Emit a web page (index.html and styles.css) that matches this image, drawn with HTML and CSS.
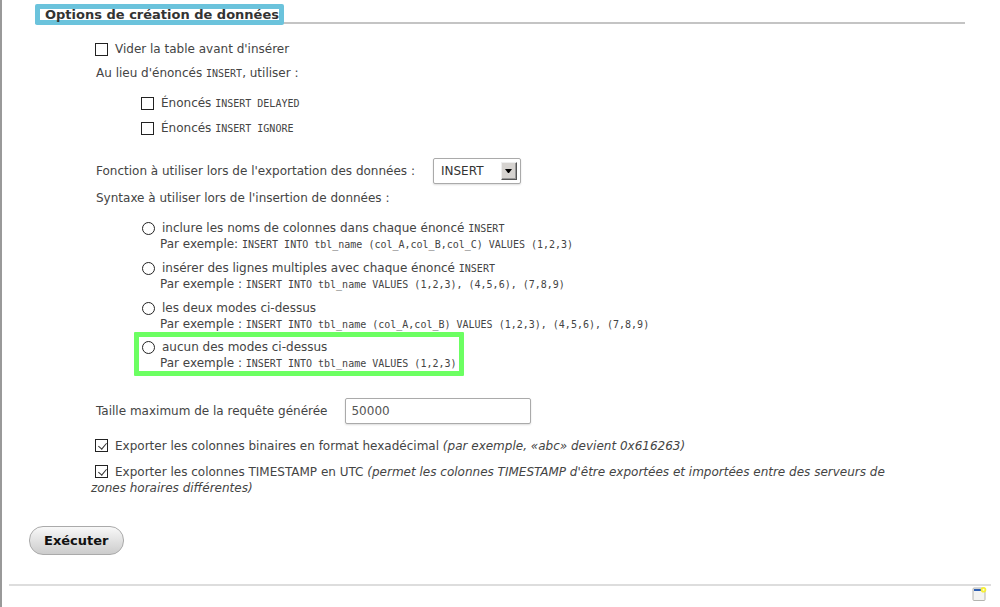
FILE: index.html
```html
<!DOCTYPE html>
<html lang="fr">
<head>
<meta charset="utf-8">
<title>Options de création de données</title>
<link rel="stylesheet" href="styles.css">
</head>
<body>
<form class="page">
  <h2 class="heading"><span class="heading-mark">Options de création de données</span></h2>
  <div class="options">
    <div class="row"><input class="check" type="checkbox" id="truncate"><label for="truncate">Vider la table avant d'insérer</label></div>
    <p class="text intro">Au lieu d'énoncés <code>INSERT</code>, utiliser :</p>
    <div class="sub statements">
      <div class="row"><input class="check" type="checkbox" id="delayed"><label for="delayed">Énoncés <code>INSERT DELAYED</code></label></div>
      <div class="row"><input class="check" type="checkbox" id="ignore"><label for="ignore">Énoncés <code>INSERT IGNORE</code></label></div>
    </div>
    <div class="row text function">
      <label for="type">Fonction à utiliser lors de l'exportation des données :</label>
      <span class="select-box">
        <select class="select" id="type"><option>INSERT</option><option>UPDATE</option><option>REPLACE</option></select>
        <span class="arrow"><svg width="7" height="4" viewBox="0 0 7 4"><path d="M0 0h7L4 4H3z"/></svg></span>
      </span>
    </div>
    <p class="text syntax">Syntaxe à utiliser lors de l'insertion de données :</p>
    <div class="sub modes">
      <div class="mode">
        <div class="row"><input class="radio" type="radio" name="mode" id="m1"><label for="m1">inclure les noms de colonnes dans chaque énoncé <code>INSERT</code></label></div>
        <p class="example">Par exemple: <code>INSERT INTO tbl_name (col_A,col_B,col_C) VALUES (1,2,3)</code></p>
      </div>
      <div class="mode">
        <div class="row"><input class="radio" type="radio" name="mode" id="m2"><label for="m2">insérer des lignes multiples avec chaque énoncé <code>INSERT</code></label></div>
        <p class="example">Par exemple : <code>INSERT INTO tbl_name VALUES (1,2,3), (4,5,6), (7,8,9)</code></p>
      </div>
      <div class="mode">
        <div class="row"><input class="radio" type="radio" name="mode" id="m3"><label for="m3">les deux modes ci-dessus</label></div>
        <p class="example">Par exemple : <code>INSERT INTO tbl_name (col_A,col_B) VALUES (1,2,3), (4,5,6), (7,8,9)</code></p>
      </div>
      <div class="mode marked">
        <div class="row"><input class="radio" type="radio" name="mode" id="m4"><label for="m4">aucun des modes ci-dessus</label></div>
        <p class="example">Par exemple : <code>INSERT INTO tbl_name VALUES (1,2,3)</code></p>
      </div>
    </div>
    <div class="row text size">
      <label for="max">Taille maximum de la requête générée</label>
      <input class="field" type="text" id="max" value="50000">
    </div>
    <div class="exports">
      <div><input class="check" type="checkbox" id="hex" checked><label for="hex">Exporter les colonnes binaires en format hexadécimal <em>(par exemple, «abc» devient 0x616263)</em></label></div>
      <div><input class="check" type="checkbox" id="utc" checked><label for="utc">Exporter les colonnes TIMESTAMP en UTC <em>(permet les colonnes TIMESTAMP d'être exportées et importées entre des serveurs de zones horaires différentes)</em></label></div>
    </div>
  </div>
  <button class="submit" type="submit">Exécuter</button>
  <footer class="footer">
    <a href="#" class="window-link" aria-label="Nouvelle fenêtre"><svg width="15" height="15" viewBox="0 0 15 15"><rect x="1" y="1" width="12" height="12.5" rx="1" fill="#f3f3f1" stroke="#b4b4b0"/><path d="M2 3h9" stroke="#2d5eb1" stroke-width="2"/><circle cx="11.5" cy="2.8" r="2.8" fill="#f5ef36"/><circle cx="11.5" cy="2.8" r="1" fill="#fffde0"/></svg></a>
  </footer>
</form>
</body>
</html>
```
FILE: styles.css
```css
* { box-sizing: border-box; }
body {
  margin: 0;
  min-height: 100vh;
  border-left: 2px solid #999;
  background: #fff;
  color: #444;
  font: 12px/16px "DejaVu Sans", sans-serif;
}
p { margin: 0; }
code { font: 10px/12px "DejaVu Sans Mono", monospace; }
.page { padding: 4px 9px 0 7px; }
.heading {
  display: flex;
  margin: 0 26px;
  border-bottom: 2px solid #c4c4c4;
  font-size: 13px;
  line-height: 11px;
}
.heading-mark {
  margin-bottom: -3px;
  padding-left: 5px;
  border: 5px solid #6bc3dc;
  border-radius: 2px;
  color: #333;
}
.options { padding: 17px 76px 0 82px; }
.row { display: flex; align-items: center; min-height: 16px; }
.text { padding-left: 5px; }
.intro { margin-top: 8px; }
.sub { padding-left: 50px; }
.statements { display: grid; gap: 9px; margin-top: 14px; }
.check, .radio {
  appearance: none;
  flex: none;
  width: 13px;
  height: 13px;
  margin: 0 7px 0 4px;
  border: 1px solid #222;
  background: #fff;
}
.statements .check { margin-left: 0; }
.radio { margin: 0 7px 0 1px; border-radius: 50%; }
.check:checked { position: relative; }
.check:checked::after {
  content: "";
  position: absolute;
  left: 4px;
  top: 1px;
  width: 4px;
  height: 7px;
  border: solid #333;
  border-width: 0 1px 1px 0;
  transform: rotate(40deg);
}
.function { margin-top: 22px; gap: 18px; }
.select-box { position: relative; }
.select {
  appearance: none;
  display: block;
  width: 88px;
  height: 26px;
  padding: 0 7px;
  border: 1px solid #aaa;
  border-radius: 2px;
  background: #fff;
  box-shadow: 0 1px 2px #ddd;
  color: #333;
  font: inherit;
}
.arrow {
  position: absolute;
  top: 4px;
  right: 4px;
  display: grid;
  place-items: center;
  width: 16px;
  height: 18px;
  border: 1px solid;
  border-color: #eee #555 #555 #eee;
  box-shadow: inset -1px -1px #999;
  background: #d6d3d0;
  pointer-events: none;
}
.syntax { margin-top: 6px; }
.modes { display: grid; justify-items: start; gap: 8px; margin-top: 14px; }
.example { padding-left: 19px; }
.marked {
  margin: -8px 0 0 -7px;
  padding: 2px 2px 0 2px;
  border: 5px solid #6cff62;
  border-radius: 1px;
}
.size { margin-top: 22px; gap: 18px; }
.field {
  width: 186px;
  height: 26px;
  padding: 0 5px;
  border: 1px solid #aaa;
  border-radius: 2px;
  box-shadow: 0 1px 2px #ddd;
  color: #555;
  font: inherit;
}
.exports { display: grid; gap: 10px; margin-top: 14px; }
.exports .check { vertical-align: -2px; }
.submit {
  display: block;
  height: 29px;
  margin: 30px 0 0 20px;
  padding: 0 14px;
  border: 1px solid #aaa;
  border-radius: 14px;
  background: linear-gradient(#f8f8f8, #ccc);
  color: #111;
  font: bold 13px/16px "DejaVu Sans", sans-serif;
}
.footer {
  display: flex;
  justify-content: flex-end;
  margin-top: 29px;
  padding: 1px 4px 0 0;
  border-top: 2px solid #ddd;
}
.window-link svg { display: block; }
```
